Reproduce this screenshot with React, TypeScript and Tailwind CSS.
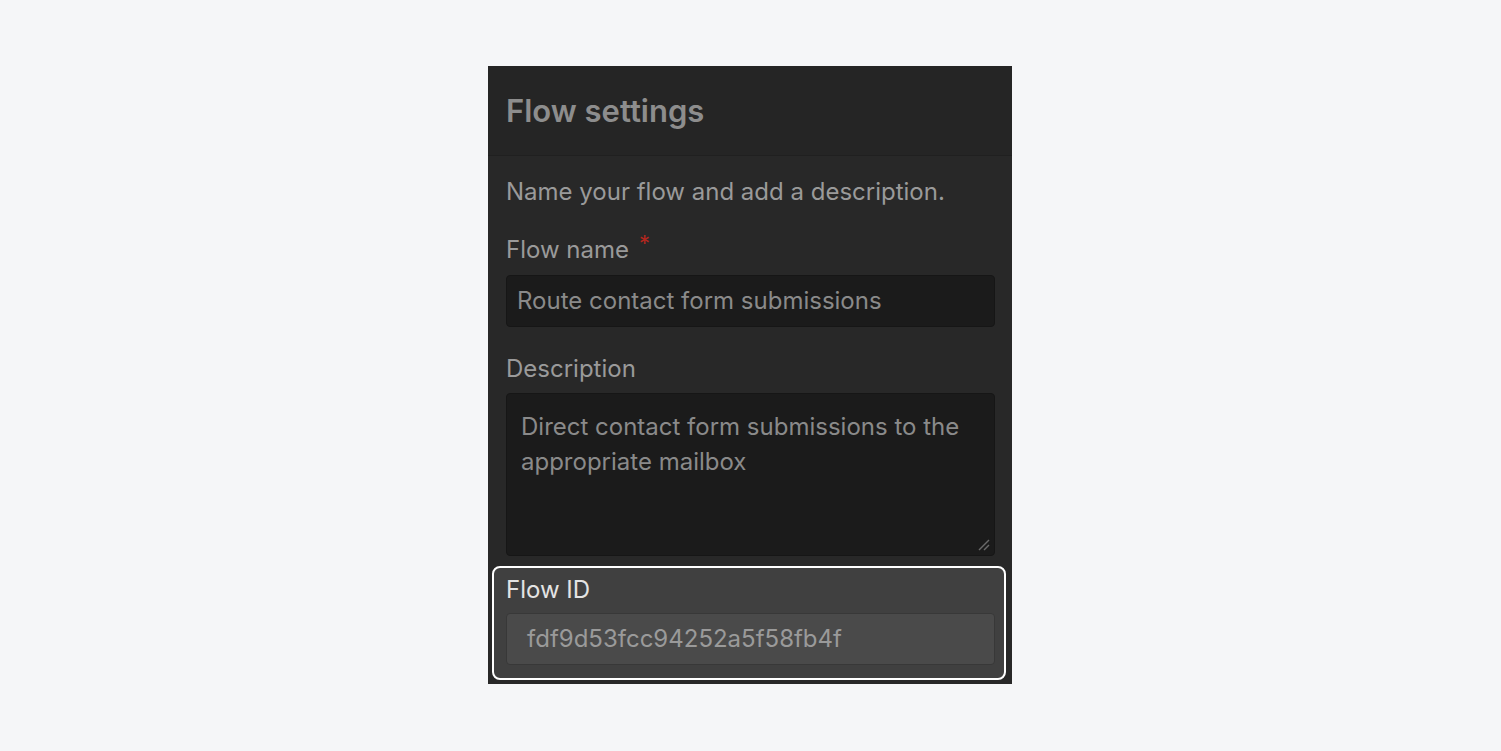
import React from "react";

export default function App() {
  const font = { fontFamily: "Inter, 'Noto Sans', sans-serif" };
  return (
    <div className="min-h-[751px] w-full bg-[#f5f6f8] flex pl-[488px]" style={font}>
      <div className="mt-[66px] w-[524px] h-[618px] bg-[#282828] overflow-hidden flex flex-col">
        <div className="h-[90px] bg-[#252525] border-b border-[#202020] flex items-center px-[18px]">
          <h1 className="text-[31px] font-semibold text-[#8d8d8d] leading-none">Flow settings</h1>
        </div>
        <div className="pl-[18px] pr-[17px] pt-[21px] flex flex-col">
          <p className="text-[24px] leading-[30px] text-[#9a9a9a]">Name your flow and add a description.</p>
          <div className="mt-[28px] flex items-start text-[24px] leading-[30px] text-[#9a9a9a]">
            <span>Flow name</span>
            <span className="ml-[10px] -mt-[7px] text-[#b3261e] text-[22px]">*</span>
          </div>
          <div className="mt-[10px] h-[52px] rounded-[4px] bg-[#1b1b1b] border border-[#161616] flex items-center px-[10px]">
            <span className="text-[24px] text-[#8a8a8a]">Route contact form submissions</span>
          </div>
          <div className="mt-[27px] text-[24px] leading-[30px] text-[#9a9a9a]">Description</div>
          <div className="relative mt-[9px] h-[163px] rounded-[4px] bg-[#1b1b1b] border border-[#161616] px-[14px] pt-[15px]">
            <p className="text-[24px] leading-[35px] text-[#8a8a8a]">
              Direct contact form submissions to the appropriate mailbox
            </p>
            <svg className="absolute right-[3px] bottom-[3px]" width="14" height="14" viewBox="0 0 14 14">
              <line x1="2" y1="12" x2="12" y2="2" stroke="#6a6a6a" strokeWidth="1.4" />
              <line x1="7" y1="12" x2="12" y2="7" stroke="#6a6a6a" strokeWidth="1.4" />
            </svg>
          </div>
          <div className="mt-[10px] -ml-[14px] -mr-[11px] h-[114px] rounded-[8px] border-2 border-white bg-[#404040] pl-[12px] pr-[9px] pt-[7px]">
            <div className="text-[24px] leading-[30px] text-[#e4e4e4]">Flow ID</div>
            <div className="mt-[8px] h-[52px] rounded-[4px] bg-[#4a4a4a] border border-[#383838] flex items-center px-[20px]">
              <span className="text-[24px] text-[#9a9a9a]">fdf9d53fcc94252a5f58fb4f</span>
            </div>
          </div>
        </div>
      </div>
    </div>
  );
}
